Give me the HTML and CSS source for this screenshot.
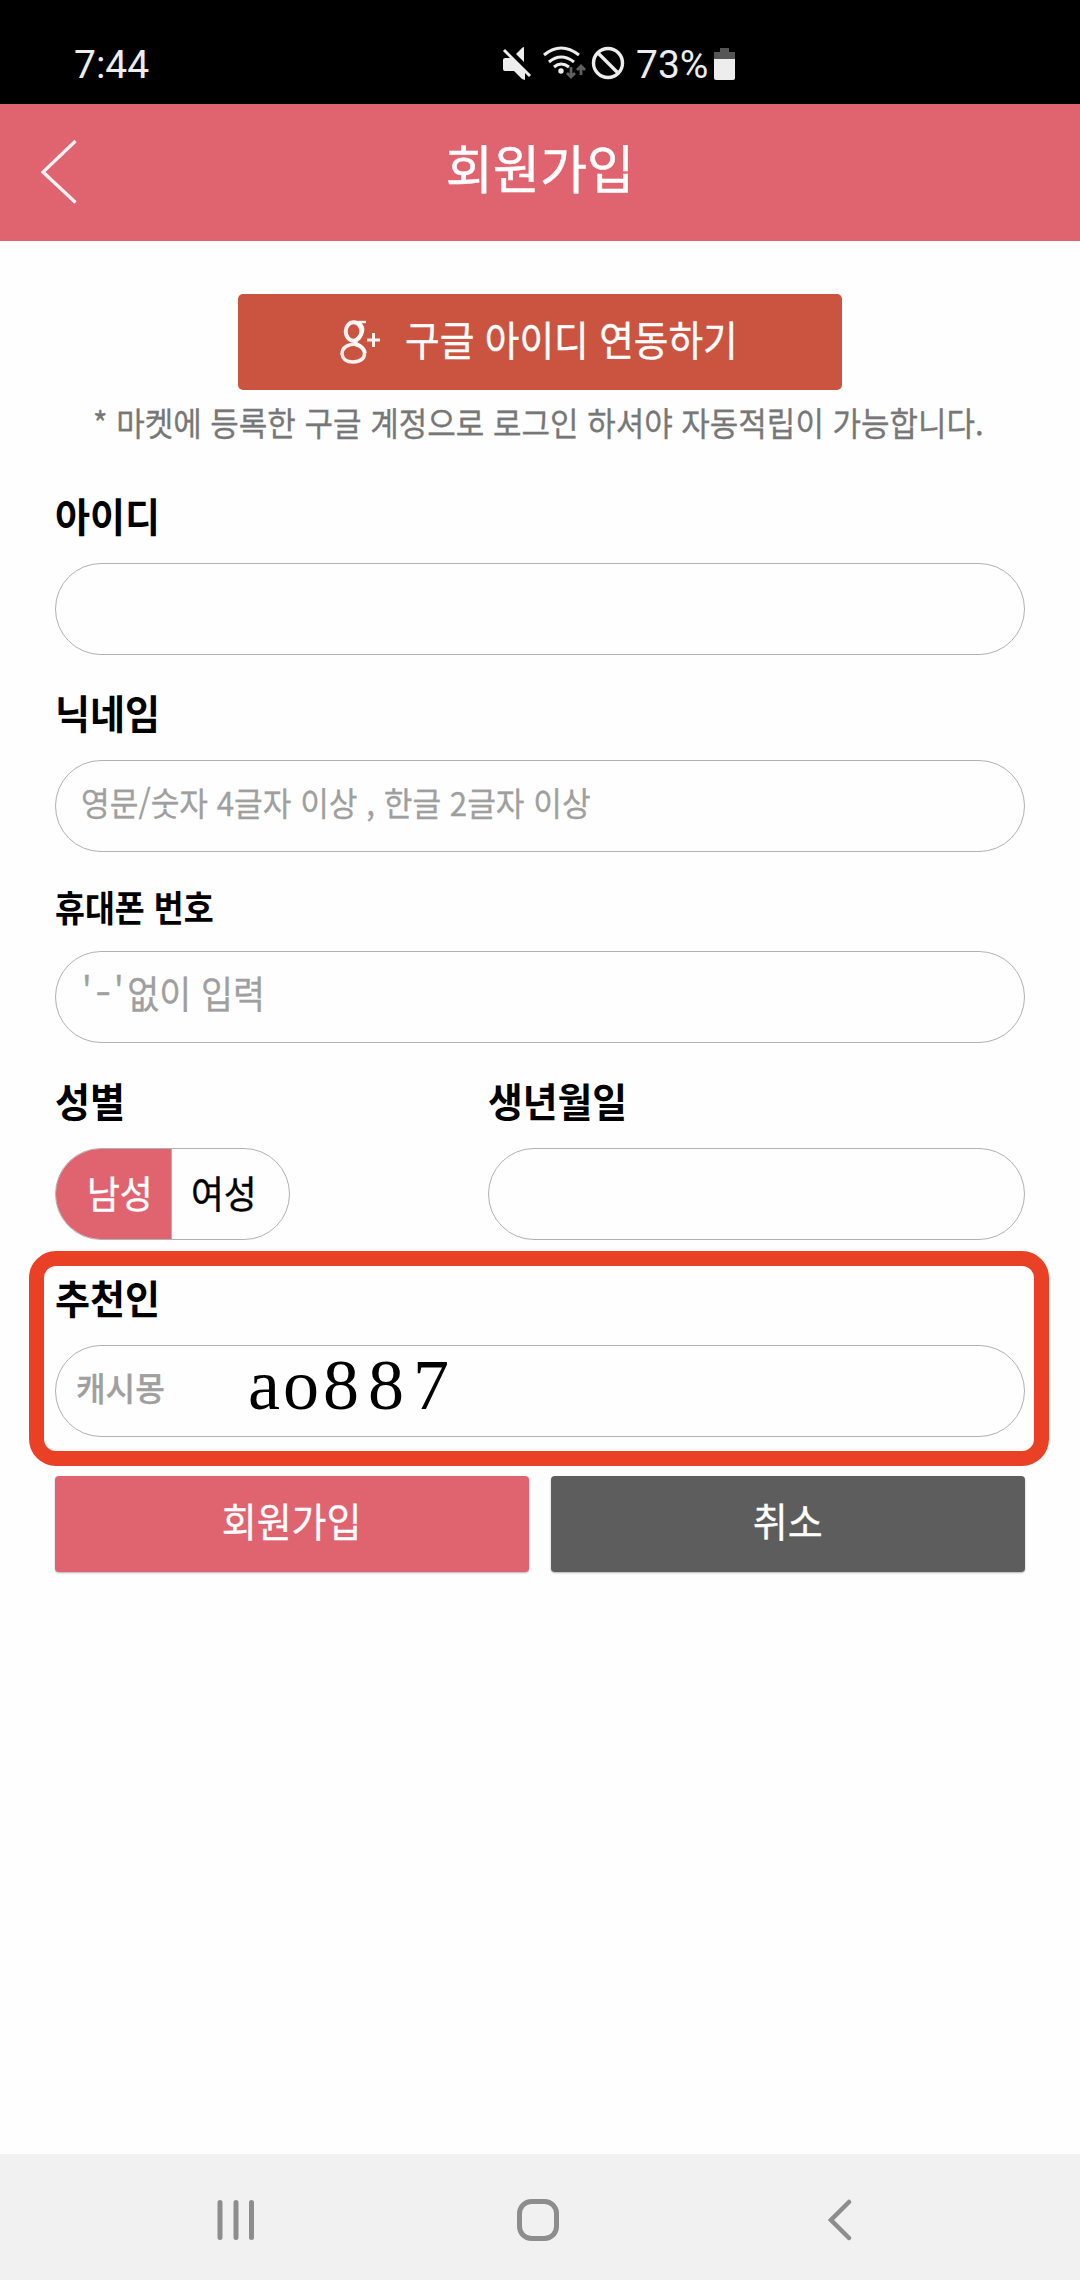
FILE: index.html
```html
<!DOCTYPE html>
<html lang="ko">
<head>
<meta charset="utf-8">
<title>회원가입</title>
<link rel="stylesheet" href="styles.css">
</head>
<body>
<div class="screen">
  <div class="status">
    <span class="clock">7:44</span>
    <svg class="status-icons" width="150" height="36" viewBox="0 0 150 36" fill="none" stroke="#ededed">
      <path d="M3 12h8L25 26v8l-3-1-8-8H5q-2 0-2-2V14q0-2 2-2zM16 8l6-6q2-2 2 0v14z" fill="#ededed" stroke="none"/>
      <path d="M4 4L30 30" stroke="#ededed" stroke-width="3"/>
      <path d="M44 9Q61-5 79 9M49 16Q61 6 74 16M54 21Q61 15 69 21" stroke-width="3"/>
      <circle cx="61" cy="25" r="2.7" fill="#ededed" stroke="none"/>
      <path d="M71 21v10M67 27l4 4 4-4M81 29V20M77 24l4-4 4 4" stroke="#606060" stroke-width="2.8"/>
      <circle cx="108" cy="17" r="14.5" stroke-width="3.4"/><path d="M98 7l20 20" stroke-width="3.4"/>
    </svg>
    <span class="percent">73%</span>
    <svg class="battery" width="22" height="34" viewBox="0 0 22 34">
      <path d="M6 1h9v4h6v8H0V5h6z" fill="#555"/><path d="M0 12h21v19q0 2-2 2H2q-2 0-2-2z" fill="#ededed"/>
    </svg>
  </div>
  <header class="header">
    <svg class="back" width="36" height="66" viewBox="0 0 36 66"><path d="M34.500 2L2 33L34.500 63.500" fill="none" stroke="#fff" stroke-opacity=".92" stroke-width="3.300"/></svg>
    <h1 class="title">회원가입</h1>
  </header>
  <main class="form">
    <button class="google">
      <svg class="gplus" width="42" height="44" viewBox="0 0 42 44" fill="none" stroke="#fff" stroke-opacity=".92">
        <path d="M26 2H14" stroke-width="2.400"/>
        <ellipse cx="13.500" cy="11.500" rx="7.800" ry="9.300" stroke-width="4"/>
        <path d="M19 3Q24 7 22 13Q21 16 17 19Q14 22 17 24Q25 28 25 33" stroke-width="3.600"/>
        <path d="M15 24Q2 25 2 34Q3 42 13 42Q25 41 24.500 33Q23 26 15 24.500" stroke-width="3.400"/>
        <path d="M33.500 13v14M27 20h13" stroke-width="3"/>
      </svg>
      <span class="google-text">구글 아이디 연동하기</span>
    </button>
    <p class="note"><span class="note-text">* 마켓에 등록한 구글 계정으로 로그인 하셔야 자동적립이 가능합니다.</span></p>
    <section class="field">
      <label class="label">아이디</label>
      <div class="input"></div>
    </section>
    <section class="field">
      <label class="label">닉네임</label>
      <div class="input"><span class="hint hint-nick">영문/숫자 4글자 이상 , 한글 2글자 이상</span></div>
    </section>
    <section class="field field-phone">
      <label class="label label-phone">휴대폰 번호</label>
      <div class="input"><span class="hint hint-phone"><span class="quoted">'<span class="dash">-</span>'</span>없이 입력</span></div>
    </section>
    <div class="columns">
      <section class="field">
        <label class="label">성별</label>
        <div class="toggle"><span class="option option-on"><span class="option-text">남성</span></span><span class="option"><span class="option-text">여성</span></span></div>
      </section>
      <section class="field">
        <label class="label label-birth">생년월일</label>
        <div class="input"></div>
      </section>
    </div>
    <section class="field referrer">
      <label class="label">추천인</label>
      <div class="input"><span class="hint hint-ref">캐시몽</span><span class="code">ao<span class="digits">887</span></span></div>
      <div class="highlight"></div>
    </section>
    <div class="actions">
      <button class="button"><span class="button-text">회원가입</span></button>
      <button class="button cancel"><span class="button-text">취소</span></button>
    </div>
  </main>
  <nav class="nav">
    <svg width="38" height="42" viewBox="0 0 38 42" stroke="#8d8d8d" stroke-width="5" stroke-linecap="round"><path d="M3 3.500v35M19 3.500v35M34.500 3.500v35"/></svg>
    <svg class="home" width="42" height="42" viewBox="0 0 42 42"><rect x="2.500" y="2.500" width="37" height="37" rx="12" fill="none" stroke="#8d8d8d" stroke-width="5"/></svg>
    <svg width="24" height="42" viewBox="0 0 24 42"><path d="M21 3L3 21L21 39" fill="none" stroke="#8d8d8d" stroke-width="4.500" stroke-linecap="round"/></svg>
  </nav>
</div>
</body>
</html>
```
FILE: styles.css
```css
* { box-sizing: border-box; }
body { margin: 0; background: #fefefe; font-family: "Noto Sans CJK KR", sans-serif; }
h1, p { margin: 0; font-weight: 400; }
button { border: 0; padding: 0; font: inherit; color: #fff; }
svg { display: block; flex: none; }
span { white-space: nowrap; }

.screen { width: 1080px; height: 2280px; display: flex; flex-direction: column; }

.status { height: 104px; padding: 26px 0 0 74px; background: #000; display: flex; color: #ededed; font-family: Roboto, sans-serif; font-size: 39px; line-height: 80px; align-items: flex-start; }
.clock { width: 426px; }
.clock, .percent { height: 78px; line-height: 79px; }
.status-icons { margin-top: 20px; }
.percent { width: 80px; margin-left: -14px; }
.battery { margin: 21px 0 0 -2px; }

.header { height: 137px; background: #e0646f; color: #fff; display: grid; grid-template-columns: 120px 1fr 120px; align-items: center; }
.back { margin-left: 41px; margin-top: -2px; }
.title { font-size: 52px; line-height: 60px; text-align: center; margin-top: -12px; transform: scaleX(.985); -webkit-text-stroke: .5px; }

.form { flex: 1; padding: 53px 55px 0; display: flex; flex-direction: column; }
.google { width: 604px; height: 96px; margin: 0 auto; border-radius: 5px; background: #cb5441; display: flex; padding: 26px 0 0 102px; }
.google-text { font-size: 41px; line-height: 38px; margin: -1px 0 0 23px; transform: scaleX(.918); transform-origin: left; -webkit-text-stroke: .4px; }
.note { height: 44px; margin: 10px 0 14px; padding-left: 38px; line-height: 44px; font-size: 33px; color: #777; }
.note-text { display: inline-block; transform: scaleX(.939); transform-origin: left; -webkit-text-stroke: .3px; }

.field { display: flex; flex-direction: column; margin-top: 32px; }
.field-phone { margin-top: 26px; }
.label { height: 50px; margin-bottom: 23px; line-height: 50px; font-size: 40px; font-weight: 700; color: #000; transform: scaleX(.952); transform-origin: left; }
.label-phone { font-size: 36px; line-height: 56px; transform: scaleX(.903); }
.label-birth { transform: scaleX(.945); }
.input { height: 92px; border: 1px solid #b1b1b1; border-radius: 46px; display: flex; align-items: center; }
.hint { color: #9f9f9f; transform-origin: left; -webkit-text-stroke: .3px; }
.hint-nick { font-size: 33px; margin: -8px 0 0 25px; transform: scaleX(.945); }
.hint-phone { font-size: 38px; margin: -11px 0 0 26px; transform: scaleX(.915); }
.quoted { letter-spacing: 4px; }
.dash { display: inline-block; transform: scaleX(1.300); margin: 0 1px 0 2px; }
.hint-ref { width: 172px; font-size: 33px; font-weight: 500; margin: -9px 0 0 20px; transform: scaleX(.975); }
.code { font-family: "Liberation Serif", serif; font-size: 72px; letter-spacing: 3px; line-height: 80px; margin-top: -12px; color: #000; }
.digits { letter-spacing: 9px; margin-left: 1px; }

.columns { display: grid; grid-template-columns: 235px 537px; column-gap: 198px; }
.toggle { height: 92px; border: 1px solid #b1b1b1; border-radius: 46px; overflow: hidden; display: flex; font-size: 38px; color: #000; }
.option { width: 118px; display: flex; align-items: center; padding: 0 0 5px 19px; }
.option-on { width: 117px; background: #e0646f; color: #fff; padding-left: 31px; border-right: 1px solid #b1b1b1; }
.option-text { transform: scaleX(.94); transform-origin: left; -webkit-text-stroke: .4px; }

.referrer { position: relative; }
.highlight { position: absolute; left: -26px; top: -21px; width: 1020px; height: 215px; border: 15px solid #e94026; border-radius: 27px; }

.actions { display: grid; grid-template-columns: 1fr 1fr; gap: 22px; margin-top: 39px; }
.button { height: 96px; border-radius: 4px; background: #e0646f; font-size: 40px; line-height: 88px; padding-bottom: 8px; box-shadow: 0 1px 2px rgba(0, 0, 0, .3); }
.cancel { background: #5d5d5d; }
.button-text { display: inline-block; transform: scaleX(.95); -webkit-text-stroke: .3px; }

.nav { height: 126px; background: #f1f1f1; display: flex; padding: 45px 228px 0 217px; justify-content: space-between; }
.home { margin-right: 7px; }
```
